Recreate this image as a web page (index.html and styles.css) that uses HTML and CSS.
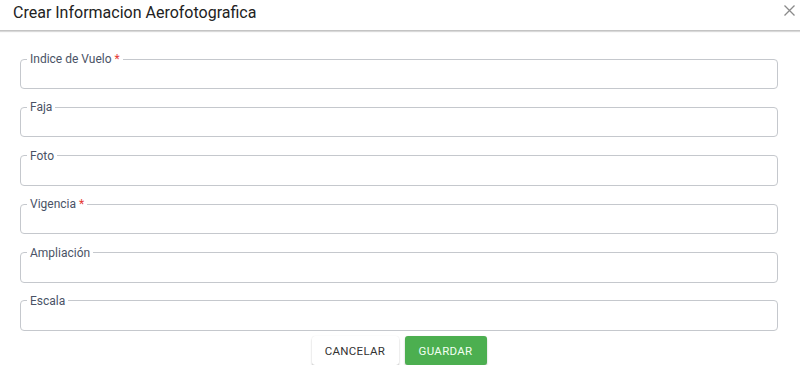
FILE: index.html
```html
<!DOCTYPE html>
<html lang="es">
<head>
<meta charset="utf-8">
<title>Crear Informacion Aerofotografica</title>
<link rel="stylesheet" href="styles.css">
</head>
<body>
<div class="dialog">
  <header class="dialog-header">
    <h1 class="dialog-title">Crear Informacion Aerofotografica</h1>
    <button class="close-btn" aria-label="Cerrar">
      <svg width="11" height="11" viewBox="0 0 11 11"><path d="M0.5 0.5L10.5 10.5M10.5 0.5L0.5 10.5" stroke="#8a8a8a" stroke-width="1.3" fill="none"/></svg>
    </button>
  </header>
  <form class="dialog-body">
    <fieldset class="field"><legend>Indice de Vuelo <span class="req">*</span></legend><input type="text"></fieldset>
    <fieldset class="field"><legend>Faja</legend><input type="text"></fieldset>
    <fieldset class="field"><legend>Foto</legend><input type="text"></fieldset>
    <fieldset class="field"><legend>Vigencia <span class="req">*</span></legend><input type="text"></fieldset>
    <fieldset class="field"><legend>Ampliación</legend><input type="text"></fieldset>
    <fieldset class="field"><legend>Escala</legend><input type="text"></fieldset>
    <div class="actions">
      <button type="button" class="btn btn-cancel">CANCELAR</button>
      <button type="button" class="btn btn-save">GUARDAR</button>
    </div>
  </form>
</div>
</body>
</html>
```

FILE: styles.css
```css
html, body {
  margin: 0;
  padding: 0;
  background: #fff;
  font-family: Roboto, "Liberation Sans", sans-serif;
}
.dialog {
  width: 800px;
}
.dialog-header {
  display: flex;
  align-items: center;
  justify-content: space-between;
  height: 31px;
  border-bottom: 1px solid #c4c4c4;
  box-shadow: 0 1px 1px rgba(0,0,0,0.15);
  padding: 0 5px 0 13px;
  box-sizing: border-box;
}
.dialog-title {
  margin: 0;
  font-size: 16px;
  font-weight: 400;
  color: #222;
  line-height: 20px;
  margin-top: -5px;
}
.close-btn {
  border: 0;
  background: none;
  padding: 0;
  width: 11px;
  height: 11px;
  margin-top: -10px;
  display: flex;
}
.dialog-body {
  display: flex;
  flex-direction: column;
  gap: 11.4px;
  padding: 21px 22px 0 20px;
  margin: 0;
}
.field {
  margin: 0;
  padding: 0 6px;
  border: 1px solid #c5c8cd;
  border-radius: 4px;
  min-width: 0;
}
.field legend {
  font-size: 12px;
  line-height: 14px;
  color: #4a5366;
  padding: 0 3px;
  margin-left: 0;
}
.req {
  color: #e53935;
}
.field input {
  display: block;
  width: 100%;
  height: 22px;
  border: 0;
  outline: none;
  padding: 0;
  background: transparent;
  font: inherit;
}
.actions {
  display: flex;
  justify-content: center;
  gap: 6px;
  margin-top: -6px;
}
.btn {
  height: 29px;
  border: 0;
  border-radius: 3px;
  font-family: Roboto, "Liberation Sans", sans-serif;
  font-size: 11.5px;
  font-weight: 400;
  letter-spacing: 0.3px;
  padding: 0;
  box-shadow: 0 2px 2px rgba(0,0,0,0.22), 0 0 1px rgba(0,0,0,0.12);
}
.btn-cancel {
  width: 87px;
  background: #fff;
  color: #333;
}
.btn-save {
  width: 82px;
  background: #4caf50;
  color: #f2fff2;
}
```
